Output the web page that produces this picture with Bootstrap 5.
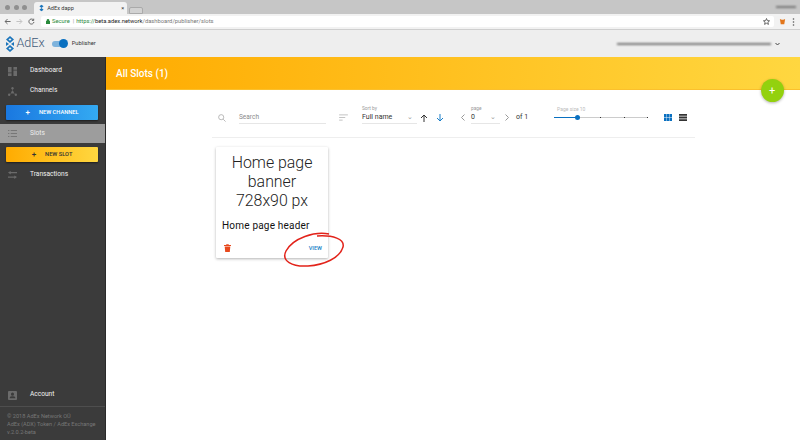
<!DOCTYPE html>
<html lang="en">
<head>
<meta charset="utf-8">
<title>AdEx dapp</title>
<link rel="stylesheet" href="https://cdn.jsdelivr.net/npm/bootstrap@5.3.0/dist/css/bootstrap.min.css">
<style>
html,body{height:100%;overflow:hidden}
body{font-family:Roboto,"Liberation Sans",sans-serif;background:#fff;color:#222;width:800px;height:440px}
.tabstrip{height:14px;background:#c6c6c6;padding-left:5px}
.dot{width:5px;height:5px;border-radius:50%;background:#8f8f8f}
.dots{gap:3.6px;padding-top:1px;margin-right:7px}
.tabshape{width:93px;height:12px;background:#f2f2f2;border-radius:3px 3px 0 0;font-size:5.6px;color:#333;padding:0 3px 0 5px;margin-top:2px}
.tabtitle{gap:3px}
.tabghost{width:14px;height:7px;margin-left:2px;margin-top:7px;background:#d2d2d2;border:1px solid #aaa;border-radius:2px 2px 0 0}
.blurname{height:2px;background:#777;filter:blur(1px)}
.blurtop{width:20px;margin-right:4px}
.blurmail{width:154px}
.toolbar{height:16px;background:#f2f2f2;border-bottom:1px solid #cfcfcf;padding-left:4px}
.navglyph{margin-right:5px}
.urlbox{width:733px;height:11px;background:#fff;border-radius:2px;font-size:5.8px;padding-left:5px;margin-left:1px;color:#777;line-height:11px}
.urlgreen{color:#2a8a3c}
.urlhost{color:#222}
.urlsep{margin:0 2px 0 3px;color:#999}
.urllock{margin-right:2px}
.foxglyph{margin-left:5px;margin-right:6px}
.appbar{height:27px;background:#eee;padding-left:5px}
.logotxt{font-size:12.6px;color:#3f5a78;margin-left:1.500px;font-weight:300;line-height:1}
.swtrack{width:15px;height:6px;border-radius:3px;background:#7fb3dc;margin-left:7px;position:relative}
.swknob{width:9px;height:9px;border-radius:50%;background:#0a70c0;position:absolute;right:-1px;top:-1.5px}
.swlabel{font-size:5.8px;color:#333;margin-left:5px}
.chevglyph{margin-left:4px;margin-right:20px}
.shell{height:383px}
.sidepanel{width:106px;background:#3b3b3b;border-right:1px solid #2a2a2a;color:#f2f2f2;font-size:6.6px}
.sideitem{height:20px;padding-left:8px;gap:13px}
.firstitem{margin-top:4px}
.sideitem svg{width:9px;height:9px;flex:none;fill:#6b6b6b}
.sideitem.pick{background:#9d9d9d;color:#eee;height:19px;margin-top:4px}
.sideitem.pick svg{fill:#777}
.sidebtn{height:15px;margin-left:6px;width:92px;border-radius:1px;font-size:5.7px;font-weight:500;gap:9px;box-shadow:0 1px 2px rgba(0,0,0,.5)}
.plusmark{font-size:8px;line-height:1}
.bluebtn{background:linear-gradient(90deg,#1a78e0,#34aaf2);color:#fff;margin-top:4px}
.ambbtn{background:linear-gradient(90deg,#ffab00,#ffd740);color:#333;margin-top:4px;margin-bottom:3px}
.acct{height:22px}
.footnote{border-top:1px solid #4e4e4e;padding:5px 0 4px 7px;font-size:5.6px;line-height:8px;color:#777}
.mainpane{position:relative;min-width:0}
.hero{height:33px;background:linear-gradient(90deg,#ffab00,#ffd740);color:#fff;font-size:10px;font-weight:500;padding-left:10px;border-bottom:1px solid #fbc02d}
.fab{position:absolute;right:16.500px;top:22px;width:23px;height:23px;border-radius:50%;background:#93d10e;color:#fff;font-size:11px;line-height:1;box-shadow:0 1px 3px rgba(0,0,0,.3)}
.filters{height:48px;margin:0 105px 0 106px;padding:8px 8px 0 6px;border-bottom:1px solid #eee;position:relative;color:#333;font-size:7px}
.ftl{font-size:4.8px;color:#999;line-height:7px}
.under{border-bottom:1px solid #e6e6e6}
.searchbox{width:87px;height:13px;color:#8a8a8a;margin-left:13px;line-height:12px;font-size:6.5px}
.sorticon{margin-left:13px;margin-right:14px}
.sortwrap{width:55px;margin-bottom:6px}
.pagewrap{width:29px;margin-bottom:6px}
.pickline{line-height:11px;padding-right:4px}
.pickchev{color:#999}
.upglyph{margin-left:3px}
.downglyph{margin-left:8px;margin-right:17px}
.prevglyph{margin-right:6px}
.nextglyph{margin:0 7px 0 5px}
.sizewrap{width:94px;margin-left:26px;margin-bottom:12px}
.sizelabel{margin-left:3px;color:#bbb;margin-bottom:3px;font-size:5px}
.slidetrack{height:1px;background:#ccc;position:relative;margin-top:4px}
.slidefill{height:1px;background:#0a70c0;width:23px}
.knob{position:absolute;left:20.500px;top:-2px;width:5px;height:5px;border-radius:50%;background:#0a70c0}
.tick{position:absolute;top:0;width:1px;height:1px;background:#333}
.tick1{left:46px}.tick2{left:70px}.tick3{left:93px}
.listglyph{margin-left:7px}
.slotcard{width:112px;height:111px;margin:9px 0 0 110px;background:#fff;box-shadow:0 1px 3px rgba(0,0,0,.3);position:relative;padding-top:5.500px;border-radius:1px}
.slottitle{font-size:15.9px;font-weight:300;line-height:19px;text-align:center;color:#222}
.slotname{font-size:10px;color:#111;padding-left:6px;margin-top:10px;line-height:12px;letter-spacing:.2px}
.slotfoot{position:absolute;left:8px;right:6px;bottom:6px}
.viewlink{font-size:5.6px;font-weight:500;color:#1a7fc8}
.ring{position:absolute;left:177px;top:175px;width:62px;height:36px;overflow:visible;pointer-events:none}
</style>
</head>
<body>
<div class="tabstrip d-flex">
  <div class="d-flex align-items-center dots"><span class="dot"></span><span class="dot"></span><span class="dot"></span></div>
  <div class="tabshape d-flex align-items-center justify-content-between">
    <span class="tabtitle d-flex align-items-center"><svg width="5" height="8" viewBox="0 0 6 8"><path d="M3 0l2.500 2-2.500 2-2.500-2zM3 4l2.500 2-2.500 2-2.500-2z" fill="#1b75bc"/></svg><span>AdEx dapp</span></span><span>×</span>
  </div>
  <div class="tabghost"></div>
  <div class="flex-grow-1"></div>
  <div class="blurname blurtop align-self-center"></div>
</div>
<div class="toolbar d-flex align-items-center">
  <svg class="navglyph" width="7" height="7" viewBox="0 0 8 8"><path d="M7.500 4H1.500M4 1.200L1.200 4 4 6.800" stroke="#555" fill="none"/></svg>
  <svg class="navglyph" width="7" height="7" viewBox="0 0 8 8"><path d="M.5 4h6M4 1.200L6.800 4 4 6.800" stroke="#bbb" fill="none"/></svg>
  <svg class="navglyph" width="7" height="7" viewBox="0 0 8 8"><path d="M6.800 4.500A2.900 2.900 0 1 1 6 2M6.500.8v2H4.500" stroke="#555" fill="none"/></svg>
  <div class="urlbox d-flex align-items-center">
    <svg class="urllock" width="4" height="5" viewBox="0 0 4 5"><path d="M0 2h4v3H0zM1 2V1a1 1 0 0 1 2 0v1" fill="#2a8a3c" stroke="#2a8a3c" stroke-width=".4"/></svg>
    <span class="urlgreen">Secure</span><span class="urlsep">|</span><span class="urlgreen">https://</span><span class="urlhost">beta.adex.network</span><span>/dashboard/publisher/slots</span>
    <svg class="ms-auto me-1" width="7" height="7" viewBox="0 0 8 8"><path d="M4 .6l1 2.400 2.500.2-1.900 1.600.6 2.500L4 6 1.800 7.300l.6-2.500L.5 3.200 3 3z" stroke="#555" fill="none"/></svg>
  </div>
  <svg class="foxglyph" width="7" height="7" viewBox="0 0 8 8"><path d="M1 1l2 1h2l2-1-1 6H2z" fill="#e2761b"/></svg>
  <svg width="3" height="8" viewBox="0 0 3 8"><circle cx="1.500" cy="1" r=".8" fill="#555"/><circle cx="1.500" cy="4" r=".8" fill="#555"/><circle cx="1.500" cy="7" r=".8" fill="#555"/></svg>
</div>
<div class="appbar d-flex align-items-center">
  <svg width="10" height="16" viewBox="0 0 10 16"><path d="M5 0L9 3.500 5 7 1 3.500zM5 2.200L3.400 3.500 5 4.800 6.600 3.500zM5 9l4 3.500L5 16l-4-3.500zM5 11.200L3.400 12.500 5 13.800l1.600-1.300zM1 6l3 2-3 2zM9 6L6 8l3 2z" fill="#1b75bc" fill-rule="evenodd"/></svg>
  <span class="logotxt">AdEx</span>
  <span class="swtrack"><span class="swknob"></span></span>
  <span class="swlabel">Publisher</span>
  <div class="flex-grow-1"></div>
  <div class="blurname blurmail"></div>
  <svg class="chevglyph" width="5" height="4" viewBox="0 0 5 4"><path d="M.5 1l2 2 2-2" stroke="#444" fill="none"/></svg>
</div>
<div class="shell d-flex">
  <nav class="sidepanel d-flex flex-column flex-shrink-0">
    <div class="sideitem firstitem d-flex align-items-center"><svg viewBox="0 0 10 10"><path d="M0 0h4v6H0zM6 0h4v3H6zM6 4h4v6H6zM0 7h4v3H0z"/></svg><span>Dashboard</span></div>
    <div class="sideitem d-flex align-items-center"><svg viewBox="0 0 10 10"><circle cx="5" cy="1.400" r="1.300"/><circle cx="1.300" cy="8.600" r="1.300"/><circle cx="8.700" cy="8.600" r="1.300"/><circle cx="5" cy="5.800" r="1.400"/><path d="M4.700 2h.6v3h-.6zM1.500 8.200l3.300-2.300.3.5-3.300 2.300zM8.500 8.200L5.200 5.900l-.3.5 3.300 2.300z"/></svg><span>Channels</span></div>
    <div class="sidebtn bluebtn d-flex align-items-center justify-content-center"><span class="plusmark">+</span><span>NEW CHANNEL</span></div>
    <div class="sideitem pick d-flex align-items-center"><svg viewBox="0 0 10 10"><path d="M0 1h1.500v1.200H0zM3 1h7v1.200H3zM0 4.400h1.500v1.200H0zM3 4.400h7v1.200H3zM0 7.800h1.500V9H0zM3 7.800h7V9H3z"/></svg><span>Slots</span></div>
    <div class="sidebtn ambbtn d-flex align-items-center justify-content-center"><span class="plusmark">+</span><span>NEW SLOT</span></div>
    <div class="sideitem d-flex align-items-center"><svg viewBox="0 0 10 10"><path d="M3 1h7v1.400H3V4L0 1.700 3 0zM7 6H0v1.400h7V9l3-2.300L7 5z"/></svg><span>Transactions</span></div>
    <div class="flex-grow-1"></div>
    <div class="sideitem acct d-flex align-items-center"><svg viewBox="0 0 10 10"><path d="M1 0h8a1 1 0 0 1 1 1v8a1 1 0 0 1-1 1H1a1 1 0 0 1-1-1V1a1 1 0 0 1 1-1zM5 1.800a1.700 1.700 0 1 0 0 3.400 1.700 1.700 0 0 0 0-3.400zM2 7v1h6V7c0-1-2-1.300-3-1.300S2 6 2 7z" fill-rule="evenodd"/></svg><span>Account</span></div>
    <div class="footnote">© 2018 AdEx Network OÜ<br>AdEx (ADX) Token / AdEx Exchange<br>v.2.0.2-beta</div>
  </nav>
  <main class="mainpane flex-grow-1">
    <div class="hero d-flex align-items-center">All Slots (1)</div>
    <div class="fab d-flex align-items-center justify-content-center">+</div>
    <div class="filters d-flex align-items-center">
      <svg width="8" height="8" viewBox="0 0 10 10" class="flex-shrink-0"><circle cx="4" cy="4" r="3.200" stroke="#aaa" fill="none"/><path d="M6.500 6.500L9.500 9.500" stroke="#aaa"/></svg>
      <div class="searchbox under flex-shrink-0">Search</div>
      <svg width="9" height="7" viewBox="0 0 10 8" class="sorticon flex-shrink-0"><path d="M0 1h10M0 4h7M0 7h4" stroke="#bbb"/></svg>
      <div class="sortwrap flex-shrink-0"><div class="ftl">Sort by</div><div class="under pickline d-flex justify-content-between"><span>Full name</span><span class="pickchev">⌄</span></div></div>
      <svg width="8" height="8" viewBox="0 0 8 8" class="upglyph flex-shrink-0"><path d="M4 8V1M1 4l3-3 3 3" stroke="#333" fill="none"/></svg>
      <svg width="8" height="8" viewBox="0 0 8 8" class="downglyph flex-shrink-0"><path d="M4 0v7M1 4l3 3 3-3" stroke="#1a7fc8" fill="none"/></svg>
      <svg width="4" height="7" viewBox="0 0 4 7" class="prevglyph flex-shrink-0"><path d="M3.500.5L.5 3.500 3.500 6.500" stroke="#999" fill="none"/></svg>
      <div class="pagewrap flex-shrink-0"><div class="ftl">page</div><div class="under pickline d-flex justify-content-between"><span>0</span><span class="pickchev">⌄</span></div></div>
      <svg width="4" height="7" viewBox="0 0 4 7" class="nextglyph flex-shrink-0"><path d="M.5.5l3 3-3 3" stroke="#999" fill="none"/></svg>
      <span class="flex-shrink-0">of 1</span>
      <div class="sizewrap flex-shrink-0"><div class="ftl sizelabel">Page size 10</div><div class="slidetrack"><div class="slidefill"></div><span class="knob"></span><span class="tick tick1"></span><span class="tick tick2"></span><span class="tick tick3"></span></div></div>
      <div class="flex-grow-1"></div>
      <svg width="8" height="7" viewBox="0 0 8 7" class="flex-shrink-0"><path d="M0 0h2.400v3H0zM2.800 0h2.400v3H2.800zM5.600 0H8v3H5.600zM0 3.500h2.400V7H0zM2.800 3.500h2.400V7H2.800zM5.600 3.500H8V7H5.600z" fill="#0a70c0"/></svg>
      <svg width="8" height="7" viewBox="0 0 8 7" class="listglyph flex-shrink-0"><path d="M0 0h8v1.800H0zM0 2.600h8v1.800H0zM0 5.200h8V7H0z" fill="#333"/></svg>
    </div>
    <div class="slotcard">
      <div class="slottitle">Home page<br>banner<br>728x90 px</div>
      <div class="slotname">Home page header</div>
      <div class="slotfoot d-flex justify-content-between align-items-center">
        <svg width="7" height="8" viewBox="0 0 7 8"><path d="M0 1h2l.5-.7h2L5 1h2v1H0zM.7 2.500h5.600L5.800 8H1.200z" fill="#e8491d"/></svg>
        <span class="viewlink">VIEW</span>
      </div>
    </div>
    <svg class="ring" viewBox="0 0 62 36"><path d="M46 2C32-1 10 6 3 19c-5 10 6 16 22 15 16-1 32-8 35-19C62 7 50 3 34 4" fill="none" stroke="#e2231a" stroke-width="1.500"/></svg>
  </main>
</div>
</body>
</html>
